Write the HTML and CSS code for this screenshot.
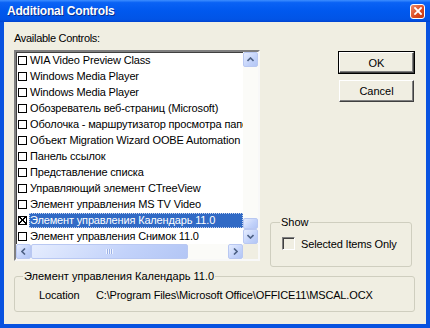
FILE: index.html
```html
<!DOCTYPE html>
<html lang="ru">
<head>
    <meta charset="UTF-8">
    <title>Additional Controls</title>
    <link rel="stylesheet" href="styles.css">
</head>
<body>
    <div class="window">
        <div class="titlebar">
            <span class="title">Additional Controls</span>
            <span class="close">
                <svg width="8" height="8" viewBox="0 0 8 8"><path d="M1 1L7 7M7 1L1 7" stroke="#fff" stroke-width="1.8" stroke-linecap="square"/></svg>
            </span>
        </div>
        <div class="body">
            <div class="top">
                <div class="left">
                    <div class="label">Available Controls:</div>
                    <div class="listbox">
                        <ul class="items">
                            <li><span class="box"></span><span class="text">WIA Video Preview Class</span></li>
                            <li><span class="box"></span><span class="text">Windows Media Player</span></li>
                            <li><span class="box"></span><span class="text">Windows Media Player</span></li>
                            <li><span class="box"></span><span class="text">Обозреватель веб-страниц (Microsoft)</span></li>
                            <li><span class="box"></span><span class="text">Оболочка - маршрутизатор просмотра папок</span></li>
                            <li><span class="box"></span><span class="text">Объект Migration Wizard OOBE Automation</span></li>
                            <li><span class="box"></span><span class="text">Панель ссылок</span></li>
                            <li><span class="box"></span><span class="text">Представление списка</span></li>
                            <li><span class="box"></span><span class="text">Управляющий элемент CTreeView</span></li>
                            <li><span class="box"></span><span class="text">Элемент управления MS TV Video</span></li>
                            <li class="selected"><span class="box checked"></span><span class="text">Элемент управления Календарь 11.0</span></li>
                            <li><span class="box"></span><span class="text">Элемент управления Снимок 11.0</span></li>
                        </ul>
                        <div class="vscroll">
                            <span class="sbtn">
                                <svg width="7" height="5" viewBox="0 0 7 5"><path d="M0.5 4L3.5 1L6.5 4" fill="none" stroke="#4d6185" stroke-width="1.6"/></svg>
                            </span>
                            <span class="track"></span>
                            <span class="thumb v"></span>
                            <span class="sbtn">
                                <svg width="7" height="5" viewBox="0 0 7 5"><path d="M0.5 1L3.5 4L6.5 1" fill="none" stroke="#4d6185" stroke-width="1.6"/></svg>
                            </span>
                        </div>
                        <div class="hscroll">
                            <span class="sbtn">
                                <svg width="5" height="7" viewBox="0 0 5 7"><path d="M4 0.5L1 3.5L4 6.5" fill="none" stroke="#4d6185" stroke-width="1.6"/></svg>
                            </span>
                            <span class="thumb h"><span class="grip"></span></span>
                            <span class="track"></span>
                            <span class="sbtn">
                                <svg width="5" height="7" viewBox="0 0 5 7"><path d="M1 0.5L4 3.5L1 6.5" fill="none" stroke="#4d6185" stroke-width="1.6"/></svg>
                            </span>
                        </div>
                        <div class="corner"></div>
                    </div>
                </div>
                <div class="right">
                    <button class="btn default">OK</button>
                    <button class="btn">Cancel</button>
                    <fieldset class="group show">
                        <legend>Show</legend>
                        <label class="check"><span class="cbox"></span>Selected Items Only</label>
                    </fieldset>
                </div>
            </div>
            <fieldset class="group info">
                <legend>Элемент управления Календарь 11.0</legend>
                <div class="location">
                    <span class="key">Location</span>
                    <span class="path">C:\Program Files\Microsoft Office\OFFICE11\MSCAL.OCX</span>
                </div>
            </fieldset>
        </div>
    </div>
</body>
</html>
```

FILE: styles.css
```css
/* General */
body {
    margin: 0;
    font-family: "Liberation Sans", Arial, sans-serif;
    font-size: 11px;
    color: #000;
    background: #fff;
}

/* Window frame */
.window {
    width: 430px;
    height: 328px;
    background: #0852e0;
    display: flex;
    flex-direction: column;
    box-sizing: border-box;
}

.titlebar {
    height: 22px;
    flex: none;
    display: flex;
    align-items: center;
    padding: 0 5px 0 7px;
    background: linear-gradient(#3d8eff 0%, #0a62f5 12%, #0058ee 50%, #0154e6 88%, #0043d0 100%);
}

.title {
    flex: 1;
    color: #fff;
    font-weight: bold;
    font-size: 12px;
    letter-spacing: -0.2px;
    text-shadow: 1px 1px 0 #0a2e8c;
}

.close {
    width: 13px;
    height: 13px;
    border: 1px solid #fff;
    border-radius: 3px;
    background: linear-gradient(135deg, #f08a6a, #d9481f 60%, #c13a15);
    display: flex;
    align-items: center;
    justify-content: center;
}

/* Dialog body */
.body {
    flex: 1;
    margin: 0 4px 4px;
    background: #f0eee2;
    padding: 9px 12px 0 10px;
}

.top {
    display: flex;
    height: 236px;
}

.left {
    width: 246px;
}

.label {
    line-height: 14px;
    letter-spacing: -0.3px;
}

/* List box */
.listbox {
    margin-top: 5px;
    width: 246px;
    height: 211px;
    box-sizing: border-box;
    border: 2px solid;
    border-color: #7f7f7f #f8f8f8 #f8f8f8 #7f7f7f;
    box-shadow: inset 1px 1px 0 #404040;
    background: #fff;
    display: grid;
    grid-template-columns: 227px 15px;
    grid-template-rows: 192px 15px;
}

.items {
    list-style: none;
    margin: 0;
    padding: 0;
    overflow: hidden;
    letter-spacing: -0.15px;
}

.items li {
    height: 16px;
    display: flex;
    align-items: center;
    white-space: nowrap;
}

.box {
    flex: none;
    width: 9px;
    height: 9px;
    box-sizing: border-box;
    border: 1px solid #000;
    margin: 0 2px 0 2px;
}

.box.checked {
    background:
        linear-gradient(45deg, transparent 45%, #000 45%, #000 58%, transparent 58%),
        linear-gradient(-45deg, transparent 45%, #000 45%, #000 58%, transparent 58%);
}

.text {
    flex: 1;
    height: 15px;
    line-height: 15px;
    padding-left: 1px;
    box-sizing: border-box;
    overflow: hidden;
}

.selected .text {
    background: #316ac5;
    color: #fff;
    outline: 1px dotted #c8d4ec;
    outline-offset: -1px;
}

/* Scroll bars */
.vscroll, .hscroll {
    display: flex;
    background: #fbfbf8;
}

.vscroll {
    flex-direction: column;
}

.track {
    flex: 1;
}

.sbtn, .thumb {
    flex: none;
    box-sizing: border-box;
    border: 1px solid #b9c8f2;
    border-radius: 2px;
    background: linear-gradient(135deg, #e6edfe, #c2d2fa 60%, #b3c6f5);
    display: flex;
    align-items: center;
    justify-content: center;
}

.vscroll .sbtn,
.hscroll .sbtn {
    width: 15px;
    height: 15px;
}

.thumb.v {
    height: 11px;
}

.thumb.h {
    width: 157px;
}

.grip {
    width: 7px;
    height: 5px;
    background: repeating-linear-gradient(90deg, #eef3ff 0 1px, #9db2e6 1px 2px);
}

.corner {
    background: #f0eee2;
}

/* Right column */
.right {
    flex: 1;
    display: flex;
    flex-direction: column;
    align-items: flex-end;
    padding-top: 21px;
}

.btn {
    width: 75px;
    height: 22px;
    font: inherit;
    background: #f0eee2;
    border: 1px solid;
    border-color: #fff #404040 #404040 #fff;
    box-shadow: inset -1px -1px 0 #808080;
    padding: 0;
}

.btn.default {
    height: 21px;
    outline: 1px solid #000;
    margin-bottom: 7px;
}

/* Group boxes */
.group {
    border: 1px solid #cfcebf;
    border-radius: 3px;
    margin: 0;
    box-sizing: border-box;
}

.group legend {
    padding: 0 1px;
    line-height: 14px;
}

.show {
    margin-top: auto;
    margin-right: 2px;
    width: 142px;
    height: 52px;
    padding: 8px 0 0 11px;
}

.show legend {
    margin-left: -2px;
}

.check {
    display: flex;
    align-items: center;
    height: 13px;
    letter-spacing: -0.15px;
}

.cbox {
    width: 13px;
    height: 13px;
    box-sizing: border-box;
    border: 1px solid;
    border-color: #808080 #fff #fff #808080;
    box-shadow: inset 1px 1px 0 #404040;
    background: #f0eee2;
    margin-right: 6px;
}

.info {
    margin-top: 2px;
    width: 401px;
    height: 43px;
    padding: 5px 0 0 24px;
}

.info legend {
    margin-left: -16px;
}

.location {
    display: flex;
    line-height: 14px;
    letter-spacing: -0.15px;
}

.key {
    width: 57px;
}
```
